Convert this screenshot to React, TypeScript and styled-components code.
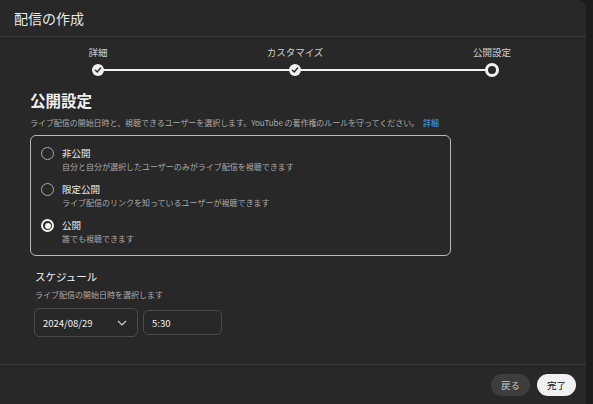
import styled, { createGlobalStyle } from "styled-components";

const Global = createGlobalStyle`
  html, body {
    margin: 0;
    padding: 0;
    background: #1c1c1c;
    font-family: "Noto Sans CJK JP", "Noto Sans", Roboto, sans-serif;
    color: #f1f1f1;
  }
`;

const Dialog = styled.div`
  width: 586px;
  height: 404px;
  background: #282828;
  border-top-right-radius: 9px;
  display: flex;
  flex-direction: column;
  overflow: hidden;
`;

const Header = styled.div`
  height: 36px;
  border-bottom: 1px solid #383838;
  display: flex;
  align-items: center;
  padding-left: 14px;
  font-size: 14px;
  color: #e8e8e8;
  flex-shrink: 0;
`;

const Stepper = styled.div`
  position: relative;
  margin: 9px 0 0 98px;
  width: 394px;
  height: 33px;
  display: flex;
  justify-content: space-between;

  &::before {
    content: "";
    position: absolute;
    left: 0;
    right: 0;
    top: 23px;
    height: 2px;
    background: #f1f1f1;
  }
`;

const Step = styled.div`
  width: 0;
  display: flex;
  flex-direction: column;
  align-items: center;
  position: relative;
`;

const StepLabel = styled.div`
  white-space: nowrap;
  font-size: 9.5px;
  line-height: 12px;
  color: #d0d0d0;
  height: 18px;
`;

const Dot = styled.div<{ $current?: boolean }>`
  width: ${(p) => (p.$current ? 14 : 12)}px;
  height: ${(p) => (p.$current ? 14 : 12)}px;
  margin-top: ${(p) => (p.$current ? -1 : 0)}px;
  box-sizing: border-box;
  border-radius: 50%;
  background: ${(p) => (p.$current ? "#282828" : "#f1f1f1")};
  border: ${(p) => (p.$current ? "3.5px solid #f1f1f1" : "none")};
  display: flex;
  align-items: center;
  justify-content: center;
`;

const Body = styled.div`
  flex: 1;
  padding: 10px 0 0 30px;
`;

const Heading = styled.h2`
  margin: 0;
  font-size: 15.5px;
  font-weight: 700;
  line-height: 22px;
  color: #f1f1f1;
`;

const Desc = styled.p`
  margin: 6px 0 0;
  font-size: 8px;
  line-height: 12px;
  color: #aaaaaa;
  letter-spacing: -0.05px;

  a {
    color: #3ea6ff;
    text-decoration: none;
    margin-left: 4px;
  }
`;

const OptionBox = styled.div`
  margin-top: 6px;
  width: 421px;
  height: 121px;
  box-sizing: border-box;
  border: 1px solid #b8b8b8;
  border-radius: 6px;
  padding: 11px 0 0 10px;
  display: flex;
  flex-direction: column;
  gap: 10px;
`;

const Option = styled.div`
  display: flex;
  align-items: flex-start;
  gap: 8px;
`;

const Radio = styled.div<{ $checked?: boolean }>`
  width: 13px;
  height: 13px;
  box-sizing: border-box;
  border-radius: 50%;
  border: ${(p) => (p.$checked ? "2px solid #f1f1f1" : "1.5px solid #aaaaaa")};
  display: flex;
  align-items: center;
  justify-content: center;

  &::after {
    content: "";
    display: ${(p) => (p.$checked ? "block" : "none")};
    width: 6px;
    height: 6px;
    border-radius: 50%;
    background: #f1f1f1;
  }
`;

const OptionText = styled.div`
  display: flex;
  flex-direction: column;
`;

const OptionTitle = styled.div`
  font-size: 9.5px;
  line-height: 13px;
  color: #ececec;
`;

const OptionSub = styled.div`
  font-size: 8px;
  line-height: 13px;
  color: #aaaaaa;
`;

const Schedule = styled.div`
  padding: 13px 0 0 5px;
`;

const SubHeading = styled.div`
  font-size: 10.5px;
  line-height: 16px;
  color: #f1f1f1;
`;

const SubDesc = styled.div`
  margin-top: 4px;
  font-size: 8px;
  line-height: 12px;
  color: #aaaaaa;
`;

const Inputs = styled.div`
  margin: 7px 0 0 -1px;
  display: flex;
  align-items: center;
  gap: 5px;
`;

const Field = styled.div<{ $w: number; $h: number }>`
  width: ${(p) => p.$w}px;
  height: ${(p) => p.$h}px;
  box-sizing: border-box;
  border: 1px solid #4a4a4a;
  border-radius: 5px;
  display: flex;
  align-items: center;
  justify-content: space-between;
  padding: 0 10px 0 8px;
  font-size: 9.5px;
  color: #f1f1f1;
`;

const Footer = styled.div`
  height: 39px;
  border-top: 1px solid #383838;
  display: flex;
  align-items: center;
  justify-content: flex-end;
  gap: 7px;
  padding-right: 10px;
  flex-shrink: 0;
`;

const Button = styled.button<{ $primary?: boolean }>`
  height: 22px;
  padding: 0 10px;
  border: none;
  border-radius: 11px;
  font-family: inherit;
  font-size: 9.5px;
  background: ${(p) => (p.$primary ? "#f1f1f1" : "#3d3d3d")};
  color: ${(p) => (p.$primary ? "#0f0f0f" : "#c8c8c8")};
`;

const Check = () => (
  <svg width="8" height="8" viewBox="0 0 10 10">
    <path d="M1.8 5.3 L4 7.4 L8.3 2.6" fill="none" stroke="#282828" strokeWidth="1.8" strokeLinecap="round" strokeLinejoin="round" />
  </svg>
);

const Chevron = () => (
  <svg width="10" height="6" viewBox="0 0 10 6">
    <path d="M1 1 L5 5 L9 1" fill="none" stroke="#d0d0d0" strokeWidth="1.2" />
  </svg>
);

export default function App() {
  const options = [
    { title: "非公開", sub: "自分と自分が選択したユーザーのみがライブ配信を視聴できます" },
    { title: "限定公開", sub: "ライブ配信のリンクを知っているユーザーが視聴できます" },
    { title: "公開", sub: "誰でも視聴できます", checked: true },
  ];

  return (
    <>
      <Global />
      <Dialog>
        <Header>配信の作成</Header>
        <Stepper>
          <Step>
            <StepLabel>詳細</StepLabel>
            <Dot>
              <Check />
            </Dot>
          </Step>
          <Step>
            <StepLabel>カスタマイズ</StepLabel>
            <Dot>
              <Check />
            </Dot>
          </Step>
          <Step>
            <StepLabel>公開設定</StepLabel>
            <Dot $current />
          </Step>
        </Stepper>
        <Body>
          <Heading>公開設定</Heading>
          <Desc>
            ライブ配信の開始日時と、視聴できるユーザーを選択します。YouTube の著作権のルールを守ってください。
            <a href="#">詳細</a>
          </Desc>
          <OptionBox>
            {options.map((o) => (
              <Option key={o.title}>
                <Radio $checked={o.checked} />
                <OptionText>
                  <OptionTitle>{o.title}</OptionTitle>
                  <OptionSub>{o.sub}</OptionSub>
                </OptionText>
              </Option>
            ))}
          </OptionBox>
          <Schedule>
            <SubHeading>スケジュール</SubHeading>
            <SubDesc>ライブ配信の開始日時を選択します</SubDesc>
            <Inputs>
              <Field $w={104} $h={29}>
                <span>2024/08/29</span>
                <Chevron />
              </Field>
              <Field $w={79} $h={25}>
                <span>5:30</span>
              </Field>
            </Inputs>
          </Schedule>
        </Body>
        <Footer>
          <Button>戻る</Button>
          <Button $primary>完了</Button>
        </Footer>
      </Dialog>
    </>
  );
}
